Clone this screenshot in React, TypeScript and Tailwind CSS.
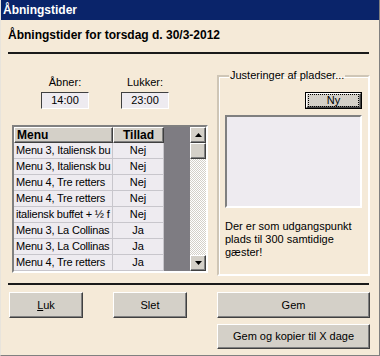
import React from "react";

const rows: [string, string][] = [
  ["Menu 3, Italiensk bu", "Nej"],
  ["Menu 3, Italiensk bu", "Nej"],
  ["Menu 4, Tre retters", "Nej"],
  ["Menu 4, Tre retters", "Nej"],
  ["italiensk buffet + ½ f", "Nej"],
  ["Menu 3, La Collinas", "Ja"],
  ["Menu 3, La Collinas", "Ja"],
  ["Menu 4, Tre retters", "Ja"],
];

const raised =
  "bg-[#d4d0c8] border border-t-white border-l-white border-r-[#404040] border-b-[#404040] shadow-[inset_-1px_-1px_0_#808080]";

function Button({ children, className }: { children: React.ReactNode; className: string }) {
  return (
    <div className={`${raised} flex items-center justify-center text-[11px] text-black ${className}`}>
      {children}
    </div>
  );
}

function Arrow({ up }: { up: boolean }) {
  return (
    <div className={`${raised} w-[16px] h-[16px] flex items-center justify-center`}>
      <svg width="7" height="4" viewBox="0 0 7 4">
        {up ? <polygon points="3.5,0 7,4 0,4" fill="#000" /> : <polygon points="0,0 7,0 3.5,4" fill="#000" />}
      </svg>
    </div>
  );
}

function Grid() {
  return (
    <div className="ml-[11px] mt-[16px] w-[196px] h-[148px] border-2 border-t-[#808080] border-l-[#808080] border-r-white border-b-white flex bg-[#7e7c82] overflow-hidden">
      <div className="flex flex-col">
        <div className="flex h-[16px]">
          <div className={`${raised} w-[99px] font-bold text-[12px] pl-[2px] leading-[14px]`}>Menu</div>
          <div className={`${raised} w-[51px] font-bold text-[12px] text-center leading-[14px]`}>Tillad</div>
        </div>
        {rows.map(([m, t], i) => (
          <div key={i} className="flex h-[16px] bg-[#eeebf0] border-b border-[#c8c6cc]">
            <div className="w-[99px] border-r border-[#c8c6cc] pl-[2px] whitespace-nowrap overflow-hidden text-[11px] leading-[15px] tracking-[-0.2px]">{m}</div>
            <div className="w-[51px] border-r border-[#c8c6cc] text-center text-[11px] leading-[15px]">{t}</div>
          </div>
        ))}
        <div className="flex h-[16px] bg-[#eeebf0]">
          <div className="w-[99px] border-r border-[#c8c6cc]" />
          <div className="w-[51px] border-r border-[#c8c6cc]" />
        </div>
      </div>
      <div className="flex-1" />
      <div className="w-[16px] flex flex-col bg-[repeating-conic-gradient(#d4d0c8_0%_25%,#ffffff_0%_50%)] bg-[length:2px_2px]">
        <Arrow up />
        <div className={`${raised} w-[16px] h-[16px]`} />
        <div className="flex-1" />
        <Arrow up={false} />
      </div>
    </div>
  );
}

export default function App() {
  return (
    <div className="w-[380px] h-[356px] bg-[#f5ead8] flex flex-col text-black font-['Liberation_Sans',Arial,sans-serif] border-l border-r border-b border-l-[#e8e4dc] border-r-[#808080] border-b-[#808080] overflow-hidden">
      <div className="h-[20px] bg-[#0a246a] text-white font-bold text-[12px] pl-[2px] flex items-center">Åbningstider</div>
      <div className="flex flex-col">
        <div className="ml-[7px] mt-[8px] font-bold text-[12px] leading-[14px]">Åbningstider for torsdag d. 30/3-2012</div>
        <div className="ml-[7px] mt-[10px] w-[361px] h-[2px] bg-[#1a1a1a]" />
        <div className="flex">
          <div className="w-[209px] flex flex-col">
            <div className="flex mt-[22px]">
              <div className="ml-[40px] w-[48px] flex flex-col items-center">
                <div className="text-[11px] leading-[13px]">Åbner:</div>
                <div className="mt-[3px] w-[48px] h-[17px] bg-[#eeebf0] border border-t-[#404040] border-l-[#404040] border-r-white border-b-white text-[11px] text-center leading-[15px]">14:00</div>
              </div>
              <div className="ml-[32px] w-[48px] flex flex-col items-center">
                <div className="text-[11px] leading-[13px]">Lukker:</div>
                <div className="mt-[3px] w-[48px] h-[17px] bg-[#eeebf0] border border-t-[#404040] border-l-[#404040] border-r-white border-b-white text-[11px] text-center leading-[15px]">23:00</div>
              </div>
            </div>
            <Grid />
          </div>
          <fieldset className="ml-[7px] mt-[15px] w-[152px] h-[207px] border-2 border-[#cfc6b6] border-r-white border-b-white shadow-[inset_1px_1px_0_#fff] px-[6px]">
            <legend className="ml-[4px] px-[1px] text-[11px] leading-[13px]">Justeringer af pladser...</legend>
            <div className="flex justify-end mt-[10px]">
              <div className="border border-black">
                <div className={`${raised} w-[55px] h-[15px] flex items-center justify-center text-[11px]`}>
                  <span className="border border-dotted border-black px-[18px] leading-[11px]">Ny</span>
                </div>
              </div>
            </div>
            <div className="mt-[6px] w-[137px] h-[93px] bg-[#eeebf0] border-2 border-t-[#808080] border-l-[#808080] border-r-white border-b-white" />
            <div className="mt-[12px] text-[11px] leading-[13px]">
              Der er som udgangspunkt
              <br />
              plads til 300 samtidige
              <br />
              gæster!
            </div>
          </fieldset>
        </div>
        <div className="ml-[7px] mt-[7px] w-[361px] h-[2px] bg-[#1a1a1a]" />
        <div className="flex mt-[7px] ml-[8px]">
          <Button className="w-[74px] h-[26px]">
            <span><span className="underline">L</span>uk</span>
          </Button>
          <Button className="ml-[30px] w-[74px] h-[26px]">Slet</Button>
          <Button className="ml-[30px] w-[153px] h-[26px]">Gem</Button>
        </div>
        <div className="flex mt-[6px] ml-[216px]">
          <Button className="w-[153px] h-[25px]">Gem og kopier til X dage</Button>
        </div>
      </div>
    </div>
  );
}
